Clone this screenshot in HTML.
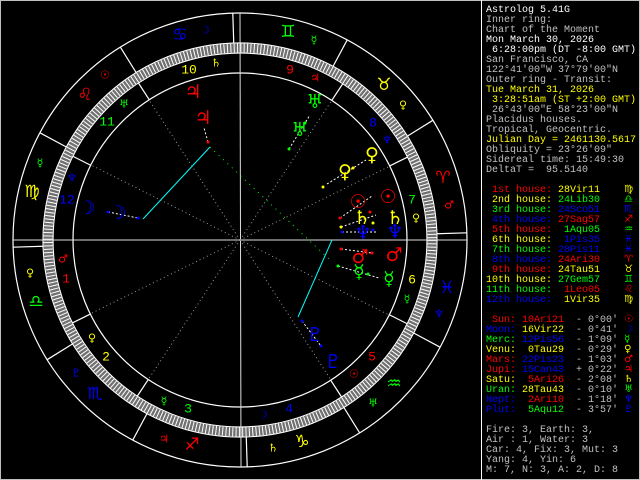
<!DOCTYPE html>
<html><head><meta charset="utf-8"><style>
html,body{margin:0;padding:0;background:#000;}
#w{position:relative;width:640px;height:480px;overflow:hidden;background:#000;}
svg{position:absolute;left:0;top:0;}
#p{position:absolute;left:486px;top:6px;font-family:"Liberation Mono",monospace;font-size:10px;line-height:10px;white-space:pre;color:#c0c0c0;}
#p div{height:10px;line-height:10px;overflow:visible;}
.r{color:#f00}.y{color:#ff0}.g{color:#0f0}.b{color:#00f}.w{color:#fff}.s{color:#c0c0c0}
.gl{font-family:"DejaVu Sans",sans-serif;line-height:0;font-size:10px;}
</style></head><body><div id="w">
<svg width="640" height="480" viewBox="0 0 640 480" font-family="DejaVu Sans, sans-serif">
<rect x="0.5" y="0.5" width="639" height="479" fill="none" stroke="#c0c0c0"/>
<line x1="481.5" y1="0" x2="481.5" y2="480" stroke="#fff"/>
<g fill="none" stroke="#fff" stroke-width="1.2">
<circle cx="240" cy="240" r="227"/>
<circle cx="240" cy="240" r="197"/>
<circle cx="240" cy="240" r="187"/>
<circle cx="240" cy="240" r="167"/>
</g>
<circle cx="240" cy="240" r="192" fill="none" stroke="#707070" stroke-width="9"/>
<circle cx="240" cy="240" r="192" fill="none" stroke="#fff" stroke-width="9" stroke-dasharray="1 2.351"/>
<g transform="translate(240,240)" stroke="#fff" stroke-width="1.2">
<g><line x1="197" x2="227" transform="rotate(-1.82)"/><line x1="197" x2="227" transform="rotate(-31.82)"/><line x1="197" x2="227" transform="rotate(-61.82)"/><line x1="197" x2="227" transform="rotate(-91.82)"/><line x1="197" x2="227" transform="rotate(-121.82)"/><line x1="197" x2="227" transform="rotate(-151.82)"/><line x1="197" x2="227" transform="rotate(-181.82)"/><line x1="197" x2="227" transform="rotate(-211.82)"/><line x1="197" x2="227" transform="rotate(-241.82)"/><line x1="197" x2="227" transform="rotate(-271.82)"/><line x1="197" x2="227" transform="rotate(-301.82)"/><line x1="197" x2="227" transform="rotate(-331.82)"/></g>
<g><line x1="167" x2="187" transform="rotate(-206.32)"/><line x1="167" x2="187" transform="rotate(-236.67)"/><line x1="167" x2="187" transform="rotate(-302.9)"/><line x1="167" x2="187" transform="rotate(-333.4)"/><line x1="167" x2="187" transform="rotate(-26.32)"/><line x1="167" x2="187" transform="rotate(-56.67)"/><line x1="167" x2="187" transform="rotate(-122.9)"/><line x1="167" x2="187" transform="rotate(-153.4)"/></g>
</g>
<line x1="13" y1="240" x2="467" y2="240" stroke="#ddd"/>
<line x1="240" y1="13" x2="241" y2="467" stroke="#ddd"/>
<g stroke="#999" stroke-dasharray="1 3">
<line x1="240" y1="240" x2="90" y2="314"/><line x1="240" y1="240" x2="148" y2="380"/><line x1="240" y1="240" x2="331" y2="380"/><line x1="240" y1="240" x2="389" y2="315"/><line x1="240" y1="240" x2="390" y2="166"/><line x1="240" y1="240" x2="332" y2="100"/><line x1="240" y1="240" x2="149" y2="100"/><line x1="240" y1="240" x2="91" y2="165"/>
</g>
<line x1="143" y1="219" x2="210" y2="147" stroke="#0ff"/>
<line x1="332" y1="240" x2="298" y2="317" stroke="#0ff"/>
<line x1="210" y1="147" x2="330" y2="260" stroke="#0f0" stroke-dasharray="1 5"/>
<g stroke="#fff" stroke-dasharray="2 2">
<line x1="208" y1="142" x2="204" y2="128"/><line x1="108" y1="212" x2="138" y2="218"/>
<line x1="289" y1="149" x2="310" y2="115"/><line x1="327" y1="184" x2="366" y2="160"/>
<line x1="340" y1="218" x2="372" y2="196"/><line x1="341" y1="227" x2="376" y2="215"/><line x1="342" y1="232" x2="378" y2="232"/>
<line x1="341" y1="249" x2="372" y2="253"/><line x1="338" y1="266" x2="379" y2="278"/>
<line x1="302" y1="321" x2="321" y2="346"/>
</g>
<g><circle cx="208" cy="142" r="1.5" fill="#f00"/><circle cx="138" cy="218" r="1.5" fill="#00f"/><circle cx="108" cy="212" r="1.5" fill="#00f"/><circle cx="305" cy="123" r="1.5" fill="#0f0"/><circle cx="289" cy="149" r="1.5" fill="#0f0"/><circle cx="353" cy="168" r="1.5" fill="#ff0"/><circle cx="323" cy="187" r="1.5" fill="#ff0"/><circle cx="340" cy="218" r="1.5" fill="#f00"/><circle cx="370" cy="212" r="1.5" fill="#f00"/><circle cx="341" cy="227" r="1.5" fill="#ff0"/><circle cx="373" cy="223" r="1.5" fill="#ff0"/><circle cx="342" cy="232" r="1.5" fill="#00f"/><circle cx="373" cy="230" r="1.5" fill="#00f"/><circle cx="341" cy="249" r="1.5" fill="#f00"/><circle cx="372" cy="253" r="1.5" fill="#f00"/><circle cx="338" cy="266" r="1.5" fill="#0f0"/><circle cx="368" cy="274" r="1.5" fill="#0f0"/><circle cx="302" cy="321" r="1.5" fill="#00f"/><circle cx="321" cy="346" r="1.5" fill="#00f"/></g>
<g text-anchor="middle" dominant-baseline="central" font-size="17">
<text x="180" y="35" fill="#00f">♋</text><text x="85" y="95" fill="#f00">♌</text><text x="32" y="192" fill="#ff0">♍</text><text x="36" y="302" fill="#0f0">♎</text><text x="95" y="394" fill="#00f">♏</text><text x="192" y="445" fill="#f00">♐</text><text x="302" y="442" fill="#ff0">♑</text><text x="394" y="384" fill="#0f0">♒</text><text x="447" y="288" fill="#00f">♓</text><text x="443" y="178" fill="#f00">♈</text><text x="384" y="85" fill="#ff0">♉</text><text x="288" y="32" fill="#0f0">♊</text>
</g>
<g text-anchor="middle" dominant-baseline="central" font-size="11">
<text x="205" y="30" fill="#00f">☽</text><text x="216" y="63" fill="#ff0">♄</text><text x="105" y="75" fill="#f00">☉</text><text x="124" y="104" fill="#0f0">♅</text><text x="40" y="163" fill="#0f0">☿</text><text x="72" y="178" fill="#00f">♆</text>
<text x="314" y="40" fill="#0f0">☿</text><text x="315" y="78" fill="#f00">♃</text><text x="403" y="105" fill="#ff0">♀</text><text x="387" y="140" fill="#00f">♆</text><text x="449" y="205" fill="#f00">♂</text><text x="416" y="218" fill="#ff0">♀</text>
<text x="407" y="299" fill="#0f0">☿</text><text x="439" y="314" fill="#00f">♆</text><text x="354" y="374" fill="#f00">☉</text><text x="373" y="403" fill="#0f0">♅</text><text x="263" y="415" fill="#00f">☽</text><text x="273" y="448" fill="#ff0">♄</text>
<text x="63" y="259" fill="#f00">♂</text><text x="30" y="273" fill="#ff0">♀</text><text x="92" y="338" fill="#ff0">♀</text><text x="76" y="373" fill="#00f">♇</text><text x="164" y="401" fill="#0f0">☿</text><text x="164" y="439" fill="#f00">♃</text>
</g>
<g text-anchor="middle" dominant-baseline="central" font-size="19">
<text x="193" y="92" fill="#f00">♃</text><text x="203" y="118" fill="#f00">♃</text><text x="87" y="208" fill="#00f">☽</text><text x="118" y="213" fill="#00f">☽</text>
<text x="315" y="102" fill="#0f0">♅</text><text x="300" y="130" fill="#0f0">♅</text><text x="372" y="155" fill="#ff0">♀</text><text x="345" y="172" fill="#ff0">♀</text>
<text x="358" y="202" fill="#f00">☉</text><text x="388" y="197" fill="#f00">☉</text><text x="362" y="218" fill="#ff0">♄</text><text x="395" y="218" fill="#ff0">♄</text><text x="363" y="233" fill="#00f">♆</text><text x="395" y="232" fill="#00f">♆</text>
<text x="360" y="257" fill="#f00">♂</text><text x="394" y="255" fill="#f00">♂</text><text x="359" y="272" fill="#0f0">☿</text><text x="389" y="279" fill="#0f0">☿</text>
<text x="315" y="335" fill="#00f">♇</text><text x="333" y="362" fill="#00f">♇</text>
</g>
<g text-anchor="middle" dominant-baseline="central" font-family="Liberation Mono, monospace" font-size="13">
<text x="66" y="279" fill="#f00">1</text><text x="106" y="357" fill="#ff0">2</text><text x="188" y="409" fill="#0f0">3</text><text x="289" y="409" fill="#00f">4</text><text x="372" y="357" fill="#f00">5</text><text x="412" y="280" fill="#ff0">6</text><text x="412" y="200" fill="#0f0">7</text><text x="373" y="123" fill="#00f">8</text><text x="290" y="70" fill="#f00">9</text><text x="189" y="70" fill="#ff0">10</text><text x="107" y="122" fill="#0f0">11</text><text x="67" y="200" fill="#00f">12</text>
</g>
</svg>
<div id="p"><div class="w">Astrolog 5.41G</div><div>Inner ring:</div><div>Chart of the Moment</div><div class="w">Mon March 30, 2026</div><div class="w"> 6:28:00pm (DT -8:00 GMT)</div><div>San Francisco, CA</div><div>122°41'00"W 37°79'00"N</div><div>Outer ring - Transit:</div><div class="y">Tue March 31, 2026</div><div class="y"> 3:28:51am (ST +2:00 GMT)</div><div> 26°43'00"E 58°23'00"N</div><div>Placidus houses.</div><div>Tropical, Geocentric.</div><div class="y">Julian Day = 2461130.5617</div><div>Obliquity = 23°26'09"</div><div>Sidereal time: 15:49:30</div><div>DeltaT =  95.5140</div><div> </div><div><span class="r"> 1st house:</span> <span class="y">28Vir11</span>    <span class="y gl">♍</span></div><div><span class="y"> 2nd house:</span> <span class="g">24Lib30</span>    <span class="g gl">♎</span></div><div><span class="g"> 3rd house:</span> <span class="b">24Sco51</span>    <span class="b gl">♏</span></div><div><span class="b"> 4th house:</span> <span class="r">27Sag57</span>    <span class="r gl">♐</span></div><div><span class="r"> 5th house:</span>  <span class="g">1Aqu05</span>    <span class="g gl">♒</span></div><div><span class="y"> 6th house:</span>  <span class="b">1Pis35</span>    <span class="b gl">♓</span></div><div><span class="g"> 7th house:</span> <span class="b">28Pis11</span>    <span class="b gl">♓</span></div><div><span class="b"> 8th house:</span> <span class="r">24Ari30</span>    <span class="r gl">♈</span></div><div><span class="r"> 9th house:</span> <span class="y">24Tau51</span>    <span class="y gl">♉</span></div><div><span class="y">10th house:</span> <span class="g">27Gem57</span>    <span class="g gl">♊</span></div><div><span class="g">11th house:</span>  <span class="r">1Leo05</span>    <span class="r gl">♌</span></div><div><span class="b">12th house:</span>  <span class="y">1Vir35</span>    <span class="y gl">♍</span></div><div> </div><div><span class="r"> Sun:</span> <span class="r">10Ari21</span>  - 0°00' <span class="r gl">☉</span></div><div><span class="b">Moon:</span> <span class="y">16Vir22</span>  - 0°41' <span class="b gl">☽</span></div><div><span class="g">Merc:</span> <span class="b">12Pis56</span>  - 1°09' <span class="g gl">☿</span></div><div><span class="y">Venu:</span>  <span class="y">0Tau29</span>  - 0°29' <span class="y gl">♀</span></div><div><span class="r">Mars:</span> <span class="b">22Pis23</span>  - 1°03' <span class="r gl">♂</span></div><div><span class="r">Jupi:</span> <span class="b">15Can43</span>  + 0°22' <span class="r gl">♃</span></div><div><span class="y">Satu:</span>  <span class="r">5Ari26</span>  - 2°08' <span class="y gl">♄</span></div><div><span class="g">Uran:</span> <span class="y">28Tau43</span>  - 0°10' <span class="g gl">♅</span></div><div><span class="b">Nept:</span>  <span class="r">2Ari10</span>  - 1°18' <span class="b gl">♆</span></div><div><span class="b">Plut:</span>  <span class="g">5Aqu12</span>  - 3°57' <span class="b gl">♇</span></div><div> </div><div>Fire: 3, Earth: 3,</div><div>Air : 1, Water: 3</div><div>Car: 4, Fix: 3, Mut: 3</div><div>Yang: 4, Yin: 6</div><div>M: 7, N: 3, A: 2, D: 8</div></div>
</div></body></html>
